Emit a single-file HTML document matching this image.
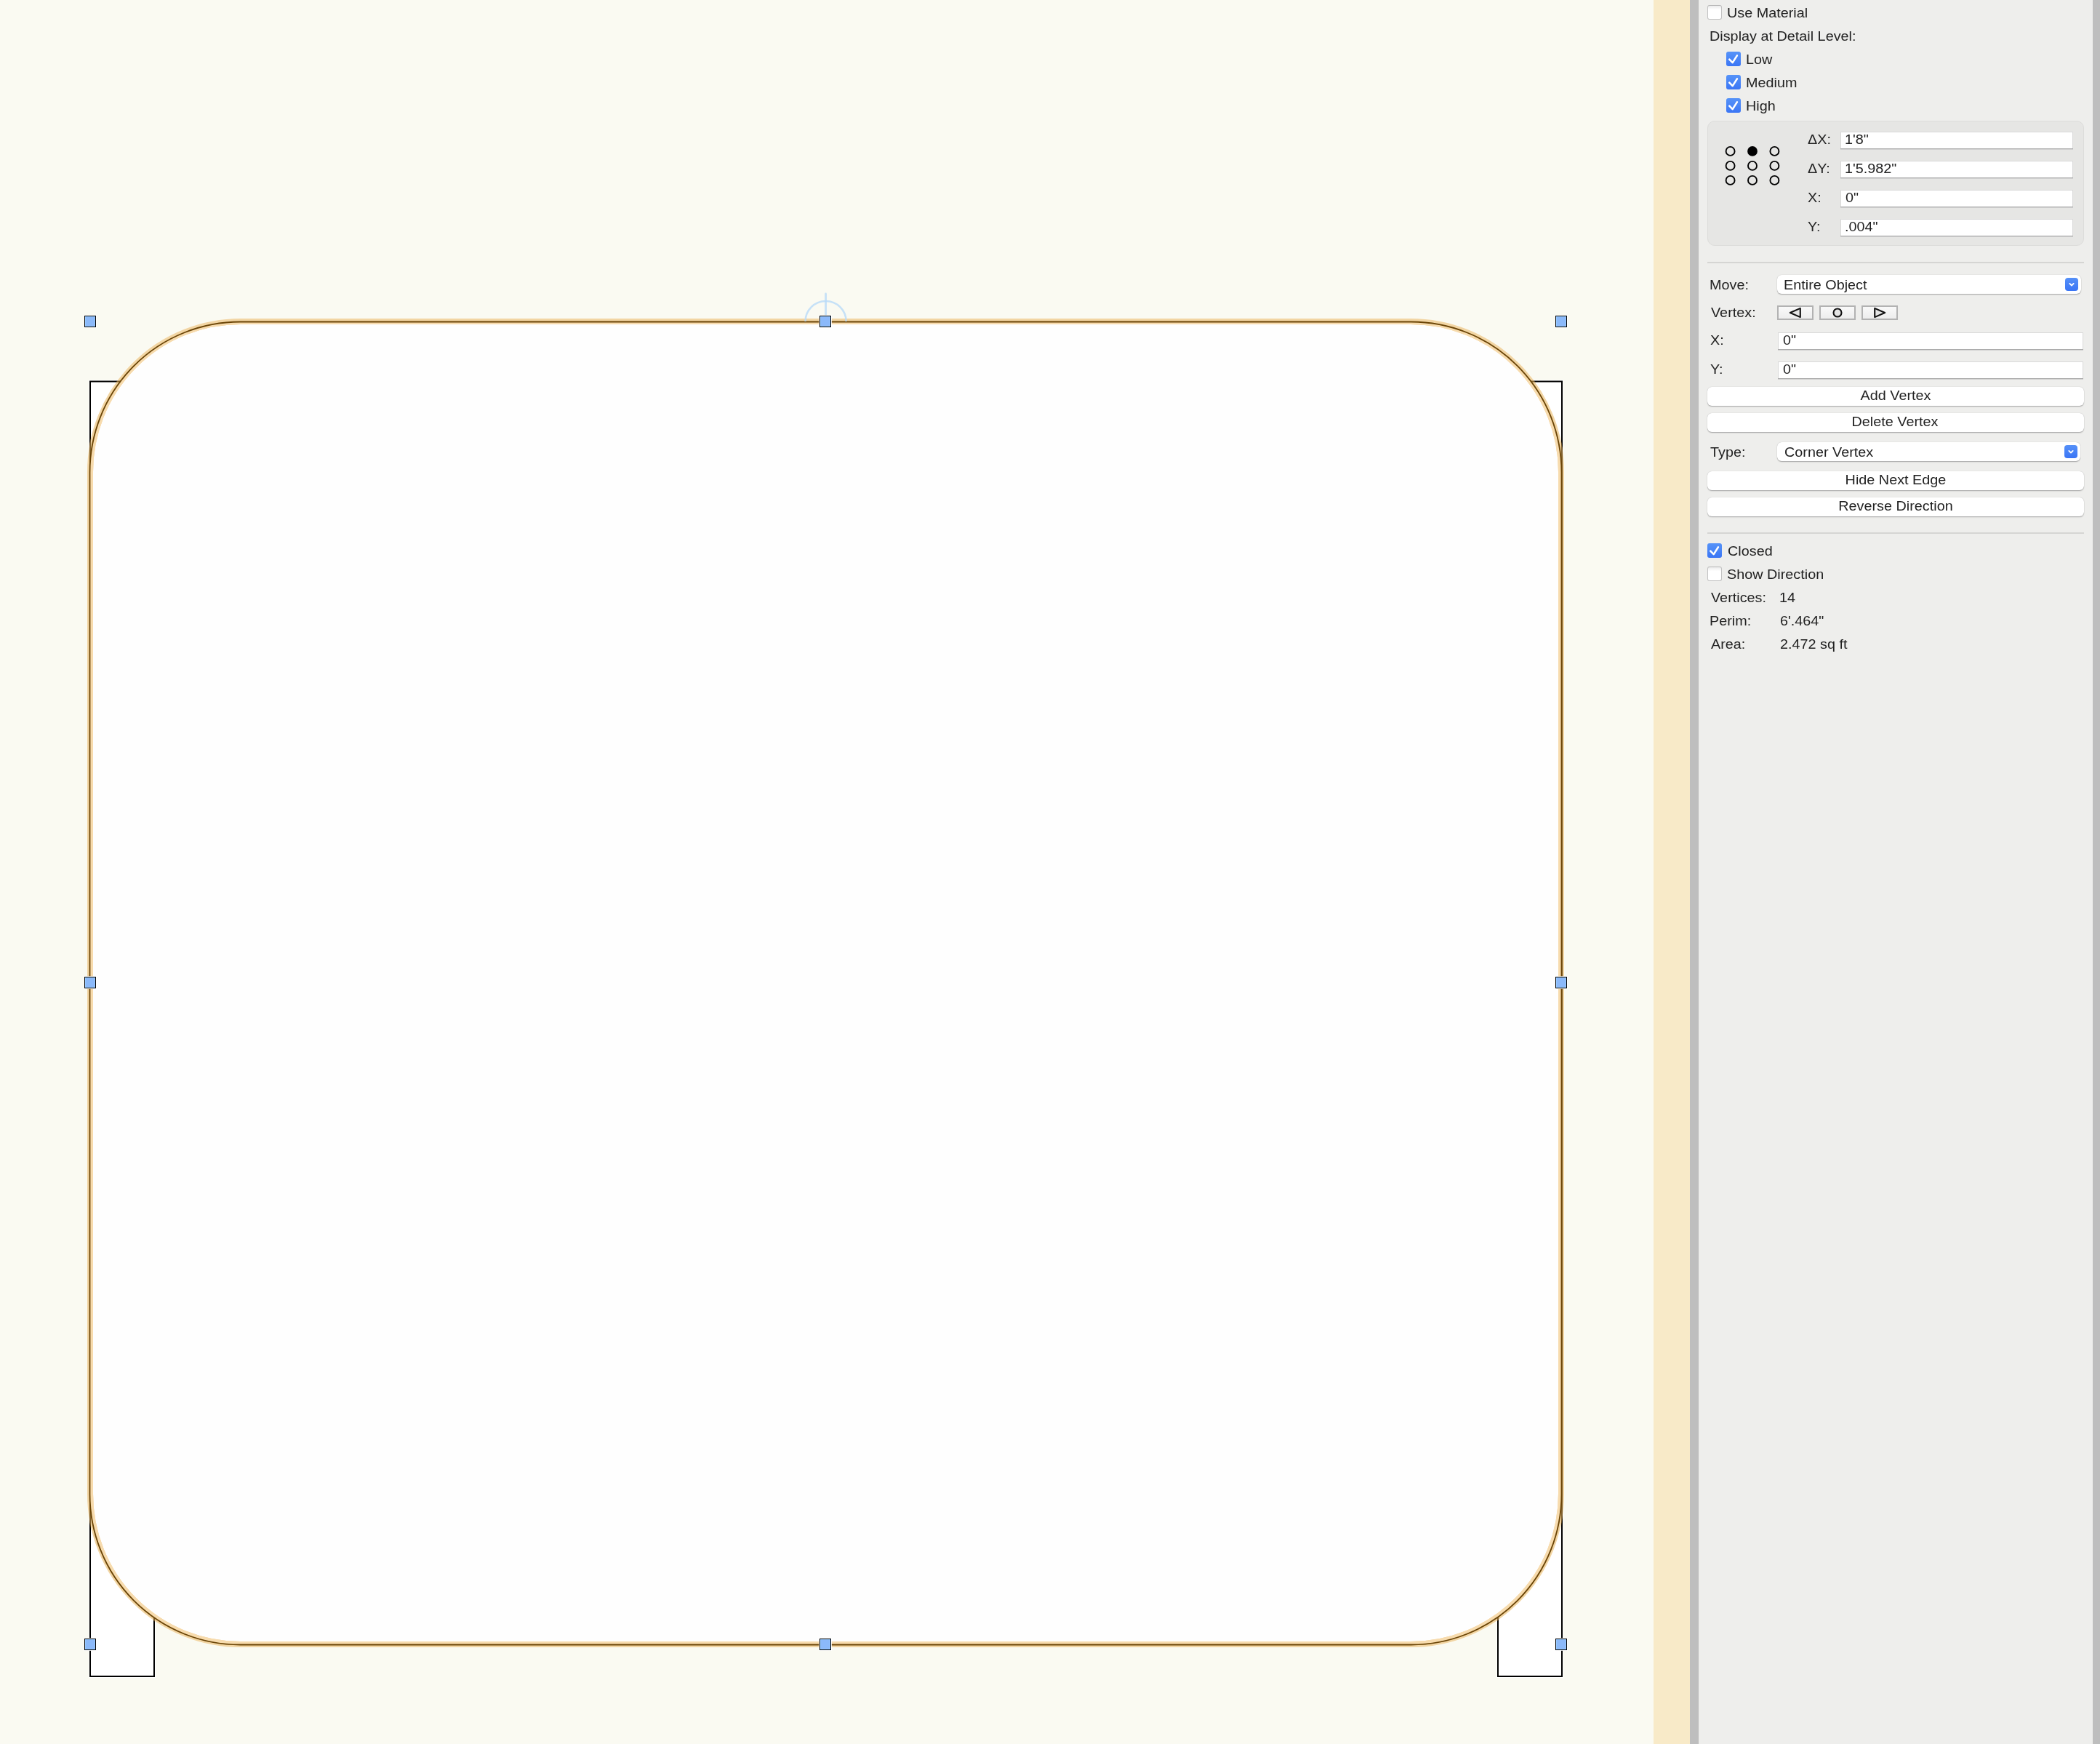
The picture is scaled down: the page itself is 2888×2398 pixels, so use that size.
<!DOCTYPE html><html><head><meta charset="utf-8"><title>Shape</title><style>
html,body{margin:0;padding:0;width:2888px;height:2398px;overflow:hidden}
body{position:relative;background:#fafaf2;font-family:"Liberation Sans",sans-serif}
.a{position:absolute}
.t{position:absolute;white-space:nowrap;transform-origin:0 0;will-change:transform}
.cbon{width:20px;height:20px;border-radius:3px;background:linear-gradient(#5693f8,#3b76f5)}
.cboff{width:18px;height:18px;border-radius:3px;border:1px solid #c2c2c2;border-top-color:#b8b8b8;background:linear-gradient(#ececec,#fff 30%,#fff)}
.fld{background:#fff;box-sizing:border-box;border:1px solid #d9d9d9;border-bottom:none;box-shadow:0 1px 0 #ababab,0 2px 0 #cfcfcf}
.pop{background:#fff;border-radius:6px;box-shadow:0 0 1px rgba(0,0,0,0.28),0 1px 1px rgba(0,0,0,0.2),0 1.5px 2px rgba(0,0,0,0.06)}
.btn{background:#fff;border-radius:6px;box-shadow:0 0 1px rgba(0,0,0,0.28),0 1px 1px rgba(0,0,0,0.2),0 1.5px 2px rgba(0,0,0,0.06)}
.arr{width:18px;height:18px;border-radius:4px;background:linear-gradient(#5590f8,#3a75f5)}
.vb{box-sizing:border-box;border:2px solid #b2b2b2;background:linear-gradient(#f9f9f9,#ededed)}
</style></head><body>
<svg class="a" style="left:0;top:0" width="2274" height="2398" viewBox="0 0 2274 2398">
<path d="M124 524.4 H2148 V2305 H2060 V2100 H212 V2305 H124 Z" fill="#fff" stroke="#ffffff" stroke-width="4" stroke-linejoin="miter"/>
<path d="M124 524.4 H2148 V2305 H2060 V2100 H212 V2305 H124 Z" fill="#fff" stroke="#000" stroke-width="2" stroke-linejoin="miter"/>
<path d="M331 442 H1940 A207 207 0 0 1 2147 649 V2054 A207 207 0 0 1 1940 2261 H331 A207 207 0 0 1 124 2054 V649 A207 207 0 0 1 331 442 Z" fill="#fefefe" stroke="#f2d5a3" stroke-width="8"/>
<path d="M331 444 H1940 A205 205 0 0 1 2145 649 V2054 A205 205 0 0 1 1940 2259 H331 A205 205 0 0 1 126 2054 V649 A205 205 0 0 1 331 444 Z" fill="none" stroke="#f7dbad" stroke-width="4"/>
<clipPath id="outside"><path clip-rule="evenodd" d="M0 0 H2274 V2398 H0 Z M330.5 442.5 H1940.5 A207 207 0 0 1 2147.5 649.5 V2054.5 A207 207 0 0 1 1940.5 2261.5 H330.5 A207 207 0 0 1 123.5 2054.5 V649.5 A207 207 0 0 1 330.5 442.5 Z"/></clipPath>
<clipPath id="band"><path d="M330.5 438.5 H1940.5 A211 211 0 0 1 2151.5 649.5 V2054.5 A211 211 0 0 1 1940.5 2265.5 H330.5 A211 211 0 0 1 119.5 2054.5 V649.5 A211 211 0 0 1 330.5 438.5 Z"/></clipPath>
<g clip-path="url(#outside)"><path d="M124 524.4 H2148 V2305 H2060 V2100 H212 V2305 H124 Z" fill="none" stroke="#5a3a08" stroke-opacity="0.75" stroke-width="2" clip-path="url(#band)"/></g>
<path d="M330.5 442.5 H1940.5 A207 207 0 0 1 2147.5 649.5 V2054.5 A207 207 0 0 1 1940.5 2261.5 H330.5 A207 207 0 0 1 123.5 2054.5 V649.5 A207 207 0 0 1 330.5 442.5 Z" fill="none" stroke="#6a4406" stroke-width="1.8"/>
<path d="M1107.6 442 A28 28 0 0 1 1163.6 442" fill="none" stroke="#b9dbf7" stroke-opacity="0.8" stroke-width="2.6"/>
<line x1="1135.6" y1="404" x2="1135.6" y2="442" stroke="#b9dbf7" stroke-opacity="0.8" stroke-width="2.8" stroke-linecap="round"/>
<rect x="115.5" y="433.5" width="17" height="17" fill="none" stroke="#fff" stroke-width="1" stroke-opacity="0.8"/>
<rect x="116.5" y="434.5" width="15" height="15" fill="#8bb9fa" stroke="#000" stroke-width="1"/>
<rect x="117.5" y="435.5" width="13" height="13" fill="none" stroke="#97c9ff" stroke-width="1"/>
<rect x="115.5" y="1342.5" width="17" height="17" fill="none" stroke="#fff" stroke-width="1" stroke-opacity="0.8"/>
<rect x="116.5" y="1343.5" width="15" height="15" fill="#8bb9fa" stroke="#000" stroke-width="1"/>
<rect x="117.5" y="1344.5" width="13" height="13" fill="none" stroke="#97c9ff" stroke-width="1"/>
<rect x="115.5" y="2252.5" width="17" height="17" fill="none" stroke="#fff" stroke-width="1" stroke-opacity="0.8"/>
<rect x="116.5" y="2253.5" width="15" height="15" fill="#8bb9fa" stroke="#000" stroke-width="1"/>
<rect x="117.5" y="2254.5" width="13" height="13" fill="none" stroke="#97c9ff" stroke-width="1"/>
<rect x="1126.5" y="433.5" width="17" height="17" fill="none" stroke="#fff" stroke-width="1" stroke-opacity="0.8"/>
<rect x="1127.5" y="434.5" width="15" height="15" fill="#8bb9fa" stroke="#000" stroke-width="1"/>
<rect x="1128.5" y="435.5" width="13" height="13" fill="none" stroke="#97c9ff" stroke-width="1"/>
<rect x="1126.5" y="2252.5" width="17" height="17" fill="none" stroke="#fff" stroke-width="1" stroke-opacity="0.8"/>
<rect x="1127.5" y="2253.5" width="15" height="15" fill="#8bb9fa" stroke="#000" stroke-width="1"/>
<rect x="1128.5" y="2254.5" width="13" height="13" fill="none" stroke="#97c9ff" stroke-width="1"/>
<rect x="2138.5" y="433.5" width="17" height="17" fill="none" stroke="#fff" stroke-width="1" stroke-opacity="0.8"/>
<rect x="2139.5" y="434.5" width="15" height="15" fill="#8bb9fa" stroke="#000" stroke-width="1"/>
<rect x="2140.5" y="435.5" width="13" height="13" fill="none" stroke="#97c9ff" stroke-width="1"/>
<rect x="2138.5" y="1342.5" width="17" height="17" fill="none" stroke="#fff" stroke-width="1" stroke-opacity="0.8"/>
<rect x="2139.5" y="1343.5" width="15" height="15" fill="#8bb9fa" stroke="#000" stroke-width="1"/>
<rect x="2140.5" y="1344.5" width="13" height="13" fill="none" stroke="#97c9ff" stroke-width="1"/>
<rect x="2138.5" y="2252.5" width="17" height="17" fill="none" stroke="#fff" stroke-width="1" stroke-opacity="0.8"/>
<rect x="2139.5" y="2253.5" width="15" height="15" fill="#8bb9fa" stroke="#000" stroke-width="1"/>
<rect x="2140.5" y="2254.5" width="13" height="13" fill="none" stroke="#97c9ff" stroke-width="1"/>
</svg>
<div class="a" style="left:2274px;top:0px;width:50px;height:2398px;background:#f8eac8"></div>
<div class="a" style="left:2324px;top:0px;width:12px;height:2398px;background:#bebebe"></div>
<div class="a" style="left:2336px;top:0px;width:542px;height:2398px;background:#eeeeec"></div>
<div class="a" style="left:2336px;top:0px;width:1px;height:2398px;background:#e9e9e7"></div>
<div class="a" style="left:2878px;top:0px;width:10px;height:2398px;background:#bebebe"></div>
<div class="a cboff" style="left:2348px;top:7px"></div>
<div class="t" style="left:2374.71px;top:9px;font-size:18.7px;line-height:18.7px;color:#222;transform:scaleX(1.06);">Use Material</div>
<div class="t" style="left:2350.71px;top:41px;font-size:18.7px;line-height:18.7px;color:#222;transform:scaleX(1.06);">Display at Detail Level:</div>
<div class="a cbon" style="left:2374px;top:71px"><svg width="20" height="20" viewBox="0 0 20 20" style="position:absolute;left:0;top:0"><path d="M4.3 10.6 L8.7 15.1 L14.9 5.4" fill="none" stroke="#fff" stroke-width="2.6" stroke-linecap="round" stroke-linejoin="round"/></svg></div>
<div class="t" style="left:2401.11px;top:73px;font-size:18.7px;line-height:18.7px;color:#222;transform:scaleX(1.06);">Low</div>
<div class="a cbon" style="left:2374px;top:103px"><svg width="20" height="20" viewBox="0 0 20 20" style="position:absolute;left:0;top:0"><path d="M4.3 10.6 L8.7 15.1 L14.9 5.4" fill="none" stroke="#fff" stroke-width="2.6" stroke-linecap="round" stroke-linejoin="round"/></svg></div>
<div class="t" style="left:2401.11px;top:105px;font-size:18.7px;line-height:18.7px;color:#222;transform:scaleX(1.06);">Medium</div>
<div class="a cbon" style="left:2374px;top:135px"><svg width="20" height="20" viewBox="0 0 20 20" style="position:absolute;left:0;top:0"><path d="M4.3 10.6 L8.7 15.1 L14.9 5.4" fill="none" stroke="#fff" stroke-width="2.6" stroke-linecap="round" stroke-linejoin="round"/></svg></div>
<div class="t" style="left:2401.11px;top:137px;font-size:18.7px;line-height:18.7px;color:#222;transform:scaleX(1.06);">High</div>
<div class="a" style="left:2348px;top:166px;width:518px;height:172px;box-sizing:border-box;border-radius:10px;background:#e6e6e4;border:1px solid #dcdcda"></div>
<svg class="a" style="left:2340px;top:190px" width="120" height="70"><circle cx="39.59999999999991" cy="17.900000000000006" r="6.0" fill="none" stroke="#000" stroke-width="1.9"/><circle cx="70.0" cy="17.900000000000006" r="6.9" fill="#000"/><circle cx="100.40000000000009" cy="17.900000000000006" r="6.0" fill="none" stroke="#000" stroke-width="1.9"/><circle cx="39.59999999999991" cy="37.900000000000006" r="6.0" fill="none" stroke="#000" stroke-width="1.9"/><circle cx="70.0" cy="37.900000000000006" r="6.0" fill="none" stroke="#000" stroke-width="1.9"/><circle cx="100.40000000000009" cy="37.900000000000006" r="6.0" fill="none" stroke="#000" stroke-width="1.9"/><circle cx="39.59999999999991" cy="57.900000000000006" r="6.0" fill="none" stroke="#000" stroke-width="1.9"/><circle cx="70.0" cy="57.900000000000006" r="6.0" fill="none" stroke="#000" stroke-width="1.9"/><circle cx="100.40000000000009" cy="57.900000000000006" r="6.0" fill="none" stroke="#000" stroke-width="1.9"/></svg>
<div class="t" style="left:2485.60px;top:183px;font-size:18.7px;line-height:18.7px;color:#222;transform:scaleX(1.06);">&Delta;X:</div>
<div class="a fld" style="left:2531px;top:181px;width:320px;height:23px"></div>
<div class="t" style="left:2536.91px;top:183px;font-size:18.7px;line-height:18.7px;color:#222;transform:scaleX(1.06);">1'8"</div>
<div class="t" style="left:2485.60px;top:223px;font-size:18.7px;line-height:18.7px;color:#222;transform:scaleX(1.06);">&Delta;Y:</div>
<div class="a fld" style="left:2531px;top:221px;width:320px;height:23px"></div>
<div class="t" style="left:2536.91px;top:223px;font-size:18.7px;line-height:18.7px;color:#222;transform:scaleX(1.06);">1'5.982"</div>
<div class="t" style="left:2485.70px;top:263px;font-size:18.7px;line-height:18.7px;color:#222;transform:scaleX(1.06);">X:</div>
<div class="a fld" style="left:2531px;top:261px;width:320px;height:23px"></div>
<div class="t" style="left:2537.71px;top:263px;font-size:18.7px;line-height:18.7px;color:#222;transform:scaleX(1.06);">0"</div>
<div class="t" style="left:2485.70px;top:303px;font-size:18.7px;line-height:18.7px;color:#222;transform:scaleX(1.06);">Y:</div>
<div class="a fld" style="left:2531px;top:301px;width:320px;height:23px"></div>
<div class="t" style="left:2536.62px;top:303px;font-size:18.7px;line-height:18.7px;color:#222;transform:scaleX(1.06);">.004"</div>
<div class="a" style="left:2348px;top:360px;width:518px;height:2px;background:#d5d5d3"></div>
<div class="t" style="left:2351.11px;top:383px;font-size:18.7px;line-height:18.7px;color:#222;transform:scaleX(1.06);">Move:</div>
<div class="a pop" style="left:2444px;top:378px;width:418px;height:26px"></div>
<div class="a arr" style="left:2840px;top:382px"><svg width="18" height="18" viewBox="0 0 18 18" style="position:absolute;left:0;top:0"><path d="M6.3 7.9 L9 10.5 L11.7 7.9" fill="none" stroke="#fff" stroke-width="1.8" stroke-linecap="round" stroke-linejoin="round"/></svg></div>
<div class="t" style="left:2453.01px;top:383px;font-size:18.7px;line-height:18.7px;color:#222;transform:scaleX(1.06);">Entire Object</div>
<div class="t" style="left:2352.70px;top:421px;font-size:18.7px;line-height:18.7px;color:#222;transform:scaleX(1.06);">Vertex:</div>
<div class="a vb" style="left:2444px;top:420px;width:50px;height:20px"></div>
<div class="a vb" style="left:2502px;top:420px;width:50px;height:20px"></div>
<div class="a vb" style="left:2560px;top:420px;width:50px;height:20px"></div>
<svg class="a" style="left:2440px;top:415px" width="180" height="30"><path d="M21.8 15 L35.8 8.9 L35.8 21.1 Z" fill="#e4e4e4" stroke="#111" stroke-width="2.1" stroke-linejoin="round"/><circle cx="87" cy="15" r="5.5" fill="#e4e4e4" stroke="#111" stroke-width="2.1"/><path d="M152.2 15 L138.2 8.9 L138.2 21.1 Z" fill="#e4e4e4" stroke="#111" stroke-width="2.1" stroke-linejoin="round"/></svg>
<div class="t" style="left:2352.30px;top:459px;font-size:18.7px;line-height:18.7px;color:#222;transform:scaleX(1.06);">X:</div>
<div class="a fld" style="left:2445px;top:457px;width:420px;height:23px"></div>
<div class="t" style="left:2452.01px;top:459px;font-size:18.7px;line-height:18.7px;color:#222;transform:scaleX(1.06);">0"</div>
<div class="t" style="left:2352.30px;top:499px;font-size:18.7px;line-height:18.7px;color:#222;transform:scaleX(1.06);">Y:</div>
<div class="a fld" style="left:2445px;top:497px;width:420px;height:23px"></div>
<div class="t" style="left:2452.01px;top:499px;font-size:18.7px;line-height:18.7px;color:#222;transform:scaleX(1.06);">0"</div>
<div class="a btn" style="left:2348px;top:532px;width:518px;height:26px"></div>
<div class="t" style="left:2307.00px;width:600px;text-align:center;top:535px;font-size:18.7px;line-height:18.7px;color:#222;transform:scaleX(1.06);transform-origin:50% 0">Add Vertex</div>
<div class="a btn" style="left:2348px;top:568px;width:518px;height:26px"></div>
<div class="t" style="left:2306.00px;width:600px;text-align:center;top:571px;font-size:18.7px;line-height:18.7px;color:#222;transform:scaleX(1.06);transform-origin:50% 0">Delete Vertex</div>
<div class="t" style="left:2352.30px;top:613px;font-size:18.7px;line-height:18.7px;color:#222;transform:scaleX(1.06);">Type:</div>
<div class="a pop" style="left:2444px;top:608px;width:417px;height:26px"></div>
<div class="a arr" style="left:2839px;top:612px"><svg width="18" height="18" viewBox="0 0 18 18" style="position:absolute;left:0;top:0"><path d="M6.3 7.9 L9 10.5 L11.7 7.9" fill="none" stroke="#fff" stroke-width="1.8" stroke-linecap="round" stroke-linejoin="round"/></svg></div>
<div class="t" style="left:2454.01px;top:613px;font-size:18.7px;line-height:18.7px;color:#222;transform:scaleX(1.06);">Corner Vertex</div>
<div class="a btn" style="left:2348px;top:648px;width:518px;height:26px"></div>
<div class="t" style="left:2307.00px;width:600px;text-align:center;top:651px;font-size:18.7px;line-height:18.7px;color:#222;transform:scaleX(1.06);transform-origin:50% 0">Hide Next Edge</div>
<div class="a btn" style="left:2348px;top:684px;width:518px;height:26px"></div>
<div class="t" style="left:2307.00px;width:600px;text-align:center;top:687px;font-size:18.7px;line-height:18.7px;color:#222;transform:scaleX(1.06);transform-origin:50% 0">Reverse Direction</div>
<div class="a" style="left:2348px;top:732px;width:518px;height:2px;background:#d5d5d3"></div>
<div class="a cbon" style="left:2348px;top:747px"><svg width="20" height="20" viewBox="0 0 20 20" style="position:absolute;left:0;top:0"><path d="M4.3 10.6 L8.7 15.1 L14.9 5.4" fill="none" stroke="#fff" stroke-width="2.6" stroke-linecap="round" stroke-linejoin="round"/></svg></div>
<div class="t" style="left:2376.11px;top:749px;font-size:18.7px;line-height:18.7px;color:#222;transform:scaleX(1.06);">Closed</div>
<div class="a cboff" style="left:2348px;top:779px"></div>
<div class="t" style="left:2375.21px;top:781px;font-size:18.7px;line-height:18.7px;color:#222;transform:scaleX(1.06);">Show Direction</div>
<div class="t" style="left:2352.70px;top:813px;font-size:18.7px;line-height:18.7px;color:#222;transform:scaleX(1.06);">Vertices:</div>
<div class="t" style="left:2447.21px;top:813px;font-size:18.7px;line-height:18.7px;color:#222;transform:scaleX(1.06);">14</div>
<div class="t" style="left:2351.11px;top:845px;font-size:18.7px;line-height:18.7px;color:#222;transform:scaleX(1.06);">Perim:</div>
<div class="t" style="left:2447.71px;top:845px;font-size:18.7px;line-height:18.7px;color:#222;transform:scaleX(1.06);">6'.464"</div>
<div class="t" style="left:2352.70px;top:877px;font-size:18.7px;line-height:18.7px;color:#222;transform:scaleX(1.06);">Area:</div>
<div class="t" style="left:2447.71px;top:877px;font-size:18.7px;line-height:18.7px;color:#222;transform:scaleX(1.06);">2.472 sq ft</div>
</body></html>
